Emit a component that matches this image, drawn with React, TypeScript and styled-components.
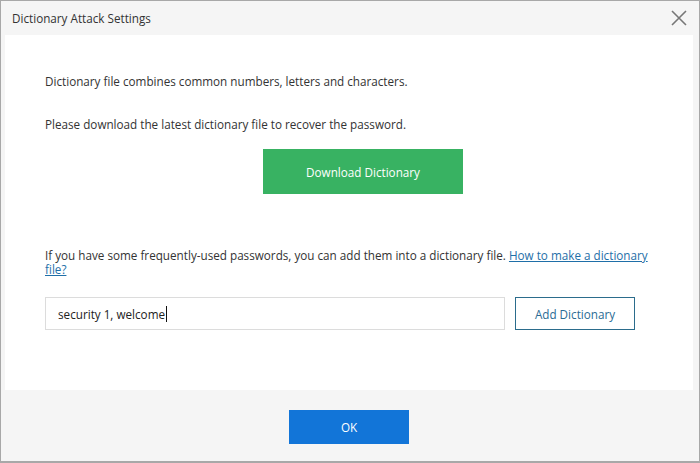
import React from "react";
import styled, { createGlobalStyle } from "styled-components";

const Global = createGlobalStyle`
  html, body { margin: 0; padding: 0; background: #ffffff; }
  * { box-sizing: border-box; }
`;

const Window = styled.div`
  position: relative;
  width: 700px;
  height: 463px;
  border: 1px solid #a8a8a8;
  border-bottom-width: 2px;
  background: #f5f5f5;
  display: flex;
  flex-direction: column;
  overflow: hidden;
  font-family: "Open Sans", "Liberation Sans", Arial, sans-serif;
  color: #333333;
`;

const TitleBar = styled.div`
  height: 34px;
  flex: none;
  display: flex;
  align-items: center;
  justify-content: space-between;
  padding: 0 8px 0 11px;
  font-size: 11.7px;
  color: #333;
`;

const CloseButton = styled.button`
  width: 24px;
  height: 24px;
  padding: 0;
  border: none;
  background: transparent;
  display: flex;
  align-items: center;
  justify-content: center;
  cursor: pointer;
`;

const Body = styled.div`
  flex: 1;
  margin: 0 6px 0 4px;
  background: #ffffff;
  padding: 39px 35px 0 40px;
  font-size: 11.7px;
  line-height: 14px;
`;

const Paragraph = styled.p<{ $gap?: number }>`
  margin: 0 0 ${(p) => p.$gap ?? 0}px 0;
`;

const DownloadRow = styled.div`
  display: flex;
  padding-left: 218px;
  margin-bottom: 54px;
`;

const GreenButton = styled.button`
  width: 200px;
  height: 45px;
  border: none;
  background: #38b262;
  color: #ffffff;
  font-family: inherit;
  font-size: 11.7px;
`;

const Link = styled.a`
  color: #1f6fa8;
  text-decoration: underline;
`;

const InputRow = styled.div`
  display: flex;
  gap: 10px;
  margin-top: 21px;
`;

const TextInput = styled.div`
  width: 460px;
  height: 33px;
  border: 1px solid #dcdcdc;
  display: flex;
  align-items: center;
  padding-left: 12px;
  font-size: 11.7px;
  color: #222;
`;

const Caret = styled.span`
  display: inline-block;
  width: 1px;
  height: 16px;
  background: #111;
  margin-left: 1px;
`;

const OutlineButton = styled.button`
  width: 120px;
  height: 33px;
  border: 1px solid #2b6c8c;
  background: #ffffff;
  color: #2a6b94;
  font-family: inherit;
  font-size: 11.7px;
`;

const Footer = styled.div`
  height: 71px;
  flex: none;
  display: flex;
  justify-content: center;
  padding-top: 20px;
  padding-right: 2px;
`;

const BlueButton = styled.button`
  width: 120px;
  height: 34px;
  border: none;
  background: #1275d8;
  color: #ffffff;
  font-family: inherit;
  font-size: 11.7px;
`;

const Watermark = styled.span`
  position: absolute;
  left: 532px;
  top: 454px;
  font-family: "Open Sans", "Liberation Sans", Arial, sans-serif;
  font-size: 21px;
  color: rgba(0, 0, 0, 0.25);
  white-space: nowrap;
  pointer-events: none;
`;

export default function App() {
  return (
    <>
      <Global />
      <Window>
        <TitleBar>
          <span>Dictionary Attack Settings</span>
          <CloseButton aria-label="Close">
            <svg width="18" height="18" viewBox="0 0 18 18">
              <path d="M2 2 L16 16 M16 2 L2 16" stroke="#777" strokeWidth="1.6" fill="none" />
            </svg>
          </CloseButton>
        </TitleBar>
        <Body>
          <Paragraph $gap={29}>Dictionary file combines common numbers, letters and characters.</Paragraph>
          <Paragraph $gap={18}>Please download the latest dictionary file to recover the password.</Paragraph>
          <DownloadRow>
            <GreenButton>Download Dictionary</GreenButton>
          </DownloadRow>
          <Paragraph>
            If you have some frequently-used passwords, you can add them into a dictionary file.{" "}
            <Link href="#">How to make a dictionary file?</Link>
          </Paragraph>
          <InputRow>
            <TextInput>
              security 1, welcome
              <Caret />
            </TextInput>
            <OutlineButton>Add Dictionary</OutlineButton>
          </InputRow>
        </Body>
        <Footer>
          <BlueButton>OK</BlueButton>
        </Footer>
        <Watermark>Activate Windows</Watermark>
      </Window>
    </>
  );
}
